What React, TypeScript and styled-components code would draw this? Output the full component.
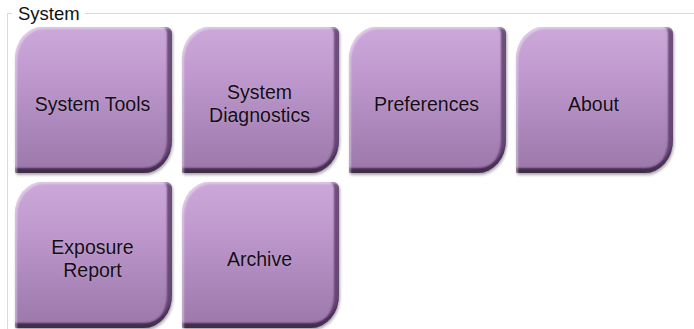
import React from "react";
import styled, { createGlobalStyle } from "styled-components";

const GlobalStyle = createGlobalStyle`
  html, body {
    margin: 0;
    padding: 0;
    background: #ffffff;
    overflow: hidden;
  }
  body {
    font-family: "Liberation Sans", Arial, sans-serif;
  }
`;

const Page = styled.div`
  width: 694px;
  height: 329px;
  overflow: hidden;
  padding: 3px 0 0 7px;
  box-sizing: border-box;
`;

const Group = styled.fieldset`
  margin: 0;
  width: 720px;
  height: 360px;
  box-sizing: border-box;
  border: 1px solid #d9d9d9;
  padding: 3px 0 0 7px;
`;

const Legend = styled.legend`
  margin-left: -3px;
  padding: 0 5px 0 6px;
  font-family: "Liberation Sans", Arial, sans-serif;
  font-size: 18.5px;
  line-height: 21px;
  color: #111111;
`;

const Grid = styled.div`
  display: grid;
  grid-template-columns: repeat(4, 157px);
  grid-auto-rows: 146px;
  column-gap: 10px;
  row-gap: 9px;
`;

const Tile = styled.button`
  position: relative;
  box-sizing: border-box;
  border: none;
  margin: 0;
  padding: 8px 6px 0 4px;
  cursor: pointer;
  display: flex;
  align-items: center;
  justify-content: center;
  text-align: center;
  font-family: "Liberation Sans", Arial, sans-serif;
  font-size: 19.5px;
  line-height: 23px;
  color: #140e16;
  border-radius: 27px 6px 28px 2px / 32px 6px 33px 2px;
  background: linear-gradient(
    180deg,
    #cca8da 0%,
    #c19bcf 30%,
    #b08bbf 60%,
    #9b77aa 100%
  );
  box-shadow:
    inset 2px 2px 2px rgba(255, 255, 255, 0.4),
    inset -6px 0 2px -1px rgba(80, 50, 95, 0.75),
    inset 0 -6px 2px -1px rgba(50, 30, 60, 0.85),
    1px 2px 3px rgba(0, 0, 0, 0.35);
  text-shadow: 0 0 2px rgba(255, 255, 255, 0.25);
`;

const items = [
  ["System Tools"],
  ["System", "Diagnostics"],
  ["Preferences"],
  ["About"],
  ["Exposure", "Report"],
  ["Archive"],
];

export default function App() {
  return (
    <>
      <GlobalStyle />
      <Page>
        <Group>
          <Legend>System</Legend>
          <Grid>
            {items.map((lines) => (
              <Tile key={lines.join(" ")}>
                <span>
                  {lines.map((l, i) => (
                    <React.Fragment key={l}>
                      {i > 0 && <br />}
                      {l}
                    </React.Fragment>
                  ))}
                </span>
              </Tile>
            ))}
          </Grid>
        </Group>
      </Page>
    </>
  );
}
